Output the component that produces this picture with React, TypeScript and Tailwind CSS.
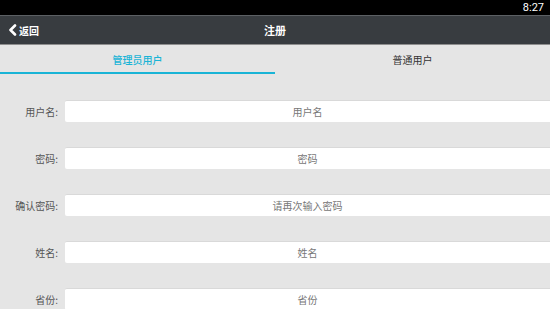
import React from "react";

const fields = [
  { label: "用户名:", placeholder: "用户名" },
  { label: "密码:", placeholder: "密码" },
  { label: "确认密码:", placeholder: "请再次输入密码" },
  { label: "姓名:", placeholder: "姓名" },
  { label: "省份:", placeholder: "省份" },
];

export default function App() {
  return (
    <div
      className="w-[550px] h-[309px] overflow-hidden flex flex-col bg-[#e5e5e5]"
      style={{ fontFamily: '"Noto Sans CJK SC", "Noto Sans", sans-serif' }}
    >
      {/* status bar */}
      <div className="h-[15px] shrink-0 bg-black flex items-center justify-end pr-[6px]">
        <span className="text-[11px] leading-none text-white" style={{ fontFamily: "Roboto, sans-serif" }}>8:27</span>
      </div>

      {/* nav */}
      <div className="h-[30px] shrink-0 bg-[#383c40] border-t border-[#5c6064] border-b border-b-[#8e8e8e] relative flex items-center justify-center">
        <div className="absolute left-[8px] top-0 bottom-0 flex items-center gap-[2px]">
          <svg width="9" height="12" viewBox="0 0 9 12">
            <polyline points="7,1.5 2.5,6 7,10.5" fill="none" stroke="white" strokeWidth="2.6" strokeLinecap="round" strokeLinejoin="round" />
          </svg>
          <span className="text-[10px] font-bold text-white">返回</span>
        </div>
        <span className="text-[11px] font-bold text-white">注册</span>
      </div>

      {/* tabs */}
      <div className="h-[30px] shrink-0 flex">
        <div className="flex-1 flex flex-col">
          <div className="flex-1 flex items-center justify-center pt-[2px] text-[10px] text-[#1ab4d6] font-medium">管理员用户</div>
          <div className="h-[2px] bg-[#1ab4d6] mb-[1px]" />
        </div>
        <div className="flex-1 flex items-center justify-center pb-[1px] text-[10px] text-[#333]">普通用户</div>
      </div>

      {/* form */}
      <div className="flex-1 flex flex-col gap-[25px] pt-[25px]">
        {fields.map((f) => (
          <div key={f.label} className="flex items-center h-[22px] shrink-0">
            <div className="w-[59px] text-right text-[10px] text-[#555] pr-[1px]">{f.label}</div>
            <div className="ml-[6px] flex-1 h-full bg-white border-t border-[#d9d9d9] rounded-l-[2px] flex items-center justify-center text-[10px] text-[#777]">
              {f.placeholder}
            </div>
          </div>
        ))}
      </div>

      <div className="h-[2px] shrink-0 bg-[#3a3a3a]" />
    </div>
  );
}
